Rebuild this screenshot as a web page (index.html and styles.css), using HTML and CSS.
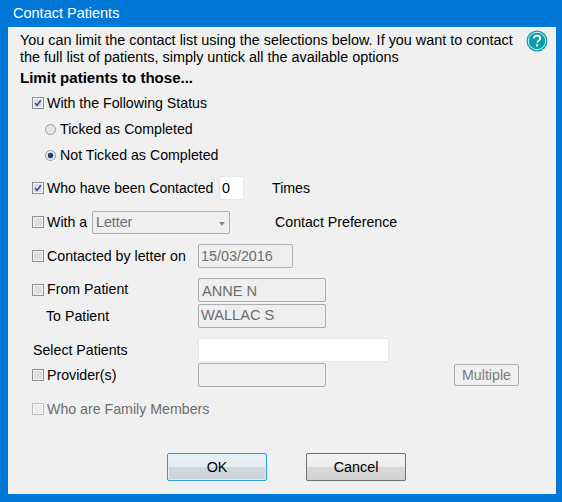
FILE: index.html
```html
<!DOCTYPE html>
<html>
<head lang="en">
    <meta charset="UTF-8">
    <title>Contact Patients</title>
    <link rel="stylesheet" href="styles.css">
</head>
<body>
    <div id="dialog">
        <div id="title">Contact Patients</div>
        <div id="panel">
            <div id="intro">
                <p>You can limit the contact list using the selections below. If you want to contact<br>the full list of patients, simply untick all the available options</p>
                <svg id="help" width="22" height="22" viewBox="0 0 22 22">
                    <circle cx="11" cy="11" r="10.5" fill="#0d9fb0"/>
                    <circle cx="11" cy="11" r="8.7" fill="#0a9dab" stroke="#d8f0f2" stroke-width="1"/>
                    <path d="M7.9 8.6c0-1.9 1.3-3 3.2-3s3.1 1 3.1 2.6c0 1.2-.6 1.9-1.6 2.6-.8.5-1.1.9-1.1 1.7v.3" fill="none" stroke="#fff" stroke-width="1.9"/>
                    <rect x="10.1" y="14.3" width="2" height="2.1" fill="#fff"/>
                </svg>
            </div>
            <div id="limit">Limit patients to those...</div>

            <div class="row">
                <span class="check on"><svg width="10" height="10" viewBox="0 0 11 11"><path d="M2.2 5.6l2.2 2.6 4.2-5.6" fill="none" stroke="#3c4f8c" stroke-width="1.8"/></svg></span>
                <span class="text">With the Following Status</span>
            </div>
            <div class="row sub">
                <span class="radio"></span>
                <span class="text">Ticked as Completed</span>
            </div>
            <div class="row sub">
                <span class="radio on"></span>
                <span class="text">Not Ticked as Completed</span>
            </div>

            <div class="row first">
                <span class="check on"><svg width="10" height="10" viewBox="0 0 11 11"><path d="M2.2 5.6l2.2 2.6 4.2-5.6" fill="none" stroke="#3c4f8c" stroke-width="1.8"/></svg></span>
                <span class="text w-contacted">Who have been Contacted</span>
                <span class="field white times">0</span>
                <span class="after-times">Times</span>
            </div>
            <div class="row gap">
                <span class="check"></span>
                <span class="text w-witha">With a</span>
                <span class="select">Letter<i class="caret"></i></span>
                <span class="after-select">Contact Preference</span>
            </div>
            <div class="row gap">
                <span class="check"></span>
                <span class="text w-label">Contacted by letter on</span>
                <span class="field date">15/03/2016</span>
            </div>
            <div class="row gap">
                <span class="check"></span>
                <span class="text w-label lift">From Patient</span>
                <span class="field name from">ANNE N</span>
            </div>
            <div class="row bare">
                <span class="plain indent">To Patient</span>
                <span class="field name to">WALLAC S</span>
            </div>
            <div class="row gap bare">
                <span class="plain">Select Patients</span>
                <span class="field white wide"></span>
            </div>
            <div class="row tight">
                <span class="check"></span>
                <span class="text w-label">Provider(s)</span>
                <span class="field name"></span>
                <span class="multiple">Multiple</span>
            </div>
            <div class="row gap disabled">
                <span class="check off"></span>
                <span class="text">Who are Family Members</span>
            </div>

            <div id="buttons">
                <button class="btn default">OK</button>
                <button class="btn">Cancel</button>
            </div>
        </div>
    </div>
</body>
</html>
```

FILE: styles.css
```css
*{
    margin: 0;
    padding: 0;
    box-sizing: border-box;
}
html,body{
    width: 562px;
    height: 502px;
    overflow: hidden;
}
body{
    font-family: "Liberation Sans", Arial, sans-serif;
    font-size: 14.2px;
    color: #000;
    background: #0078d7;
}
#dialog{
    height: 502px;
    padding: 0 6px 8px 8px;
    display: flex;
    flex-direction: column;
}
#title{
    height: 27px;
    line-height: 26px;
    padding-left: 5px;
    color: #fff;
    font-size: 14.5px;
}
#panel{
    flex: 1;
    background: #f0f0f0;
    padding: 5px 0 0 12px;
}
#intro{
    display: flex;
    align-items: flex-start;
    height: 35px;
}
#intro p{
    width: 506px;
    font-size: 14.42px;
    line-height: 17px;
    white-space: nowrap;
}
#help{
    margin-top: -2px;
}
#limit{
    font-weight: bold;
    font-size: 15.05px;
    height: 22px;
    line-height: 21px;
}

/* form rows */
.row{
    display: flex;
    align-items: center;
    height: 24px;
    padding-left: 12px;
    margin-top: 2px;
}
.row.sub{
    padding-left: 25px;
}
.row.first{
    margin-top: 9px;
}
.row.gap{
    margin-top: 10px;
}
.row.bare{
    padding-left: 0;
}
.row.tight{
    margin-top: 1px;
}
.row.disabled{
    color: #6d6d6d;
}
.plain{
    width: 178px;
    white-space: nowrap;
    padding-left: 13px;
}
.plain.indent{
    padding-left: 26px;
}
.check{
    width: 12px;
    height: 12px;
    flex: none;
    border: 1px solid #8e8e8e;
    background: #dedede;
    box-shadow: inset 0 0 0 1px #f6f6f6;
    display: flex;
    align-items: center;
    justify-content: center;
}
.check + .text{
    margin-left: 3px;
}
.check.on{
    background: #dcdfe8;
}
.check.off{
    border-color: #bdbdbd;
    background: #ececec;
}
.radio{
    width: 11px;
    height: 11px;
    flex: none;
    border-radius: 50%;
    border: 1px solid #9a9a9a;
    background: #e6e6e6;
    margin-right: 2px;
}
.radio.on{
    background: radial-gradient(circle, #24406f 0, #24406f 2.5px, #eee 3.2px);
}
.text{
    margin-left: 2px;
    white-space: nowrap;
}
.lift{
    margin-top: -2px;
}
.w-contacted{
    width: 172px;
    font-size: 14.05px;
}
.w-witha{
    width: 45px;
}
.w-label{
    width: 151px;
}

/* fields */
.field{
    height: 24px;
    border: 1px solid #adadad;
    border-radius: 2px;
    background: #efefef;
    color: #6d6d6d;
    padding: 0 2px;
    font-size: 14.35px;
    line-height: 22px;
    white-space: nowrap;
}
.field.white{
    background: #fff;
    border-color: #e6e6e6;
    color: #000;
}
.from{
    font-size: 14.6px;
    padding-left: 3px;
    line-height: 25px;
}
.to{
    font-size: 14.6px;
    padding-left: 2px;
    line-height: 21px;
}
.times{
    width: 25px;
    padding-left: 2px;
}
.after-times{
    margin-left: 28px;
}
.after-select{
    margin-left: 45px;
    white-space: nowrap;
}
.date{
    width: 95px;
}
.name{
    width: 128px;
}
.wide{
    width: 191px;
}
.select{
    position: relative;
    width: 138px;
    height: 23px;
    border: 1px solid #adadad;
    border-radius: 2px;
    background: #efefef;
    color: #6d6d6d;
    line-height: 21px;
    padding-left: 3px;
}
.caret{
    position: absolute;
    right: 4px;
    top: 10px;
    border: 3px solid transparent;
    border-top: 4px solid #8a8a8a;
    border-bottom: 0;
}
.multiple{
    width: 65px;
    height: 22px;
    margin-left: 128px;
    border: 1px solid #adadad;
    border-radius: 2px;
    background: #f0f0f0;
    color: #7a7a7a;
    text-align: center;
    line-height: 20px;
}

/* bottom buttons */
#buttons{
    display: flex;
    gap: 39px;
    margin-top: 32px;
    padding-left: 147px;
}
.btn{
    width: 100px;
    height: 28px;
    font-family: inherit;
    font-size: 14.35px;
    color: #000;
    border: 1px solid #6f6f6f;
    border-radius: 2px;
    background: linear-gradient(#f3f3f3 0, #ececec 48%, #d8d8d8 52%, #d2d2d2 100%);
}
.btn.default{
    border-color: #2f9fd8;
    box-shadow: inset 0 0 0 1px #d9eef8;
    background: linear-gradient(#eaf1f5 0, #e4ecf1 48%, #d0d8de 52%, #ccd4da 100%);
}
```
